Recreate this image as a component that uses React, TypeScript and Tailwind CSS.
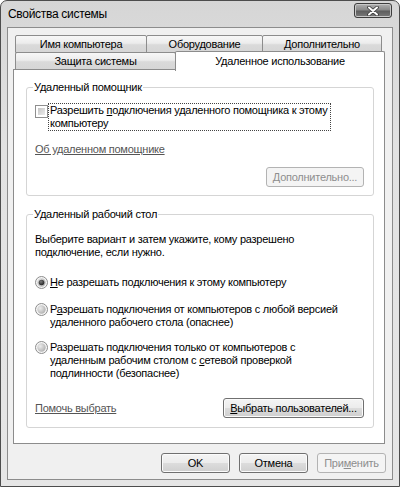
import React from 'react';

const btnFace =
  'bg-[linear-gradient(to_bottom,#f4f4f4_0%,#ececec_48%,#dcdcdc_52%,#cfcfcf_100%)] shadow-[inset_0_0_0_1px_#fbfbfb]';

const tabFace =
  'bg-[linear-gradient(to_bottom,#f7f7f7_0%,#ececec_45%,#dadada_55%,#d6d6d6_100%)]';

interface ButtonProps {
  children: React.ReactNode;
  width: string;
  disabled?: boolean;
}

const Button: React.FC<ButtonProps> = ({ children, width, disabled }) => (
  <div
    className={
      disabled
        ? `${width} flex h-[20px] items-center justify-center rounded-[3px] border border-[#b3b3b3] bg-[#f4f4f4] text-[#8e8e8e]`
        : `${width} flex h-[20px] items-center justify-center rounded-[3px] border border-[#707070] ${btnFace}`
    }
  >
    {children}
  </div>
);

const Radio: React.FC<{ checked?: boolean; id: string }> = ({ checked, id }) => (
  <svg width="13" height="13" viewBox="0 0 13 13" className="shrink-0">
    <defs>
      <radialGradient id={`${id}-in`} cx="0.35" cy="0.35" r="0.8">
        <stop offset="0" stopColor="#ececec" />
        <stop offset="1" stopColor="#a9a9a9" />
      </radialGradient>
      <radialGradient id={`${id}-dot`} cx="0.4" cy="0.35" r="0.7">
        <stop offset="0" stopColor="#7a7a7a" />
        <stop offset="1" stopColor="#1c1c1c" />
      </radialGradient>
    </defs>
    <circle cx="6.5" cy="6.5" r="6" fill="#f5f5f5" stroke="#8c8c8c" strokeWidth="1" />
    <circle cx="6.5" cy="6.5" r="4.2" fill={`url(#${id}-in)`} />
    {checked && <circle cx="6.5" cy="6.5" r="2.8" fill={`url(#${id}-dot)`} />}
  </svg>
);

const Tab: React.FC<{ children: React.ReactNode; width: string; first?: boolean }> = ({
  children,
  width,
  first,
}) => (
  <div
    className={`${width} ${first ? '' : '-ml-px'} flex h-full items-center justify-center rounded-t-[2px] border border-[#8c8c8c] ${tabFace}`}
  >
    {children}
  </div>
);

const App: React.FC = () => {
  return (
    <div className="flex h-[487px] w-[400px] flex-col rounded-t-[7px] border border-[#4d4d4d] bg-[linear-gradient(to_bottom,#d6d6d6_0%,#e2e2e2_30%,#e6e6e6_100%)] px-[6px] pb-[6px] font-['Liberation_Sans',Arial,sans-serif] text-[11px] leading-[13px] tracking-[-0.25px] text-black">
      {/* title bar */}
      <div className="flex h-[26px] items-start justify-between">
        <span className="pl-px pt-[7px] text-[12px] tracking-[-0.3px]">Свойства системы</span>
        <div className="mr-px mt-[2px] flex h-[15px] w-[38px] items-center justify-center rounded-[3px] border border-[#3d3d3d] bg-[linear-gradient(to_bottom,#b0b0b0_0%,#8a8a8a_45%,#5e5e5e_55%,#7a7a7a_100%)] shadow-[inset_0_0_0_1px_#c8c8c8]">
          <svg width="12" height="10" viewBox="0 0 12 10">
            <path d="M2 1.5 L10 8.5 M10 1.5 L2 8.5" stroke="#3a3a3a" strokeWidth="3.6" strokeLinecap="round" />
            <path d="M2 1.5 L10 8.5 M10 1.5 L2 8.5" stroke="#ffffff" strokeWidth="2" strokeLinecap="round" />
          </svg>
        </div>
      </div>

      {/* client area */}
      <div className="flex flex-1 flex-col border border-[#8c8c8c] bg-[#f0f0f0] pl-[5px] pr-[7px] pt-[7px]">
        <div className="ml-[2px] flex flex-col">
          <div className="flex h-[18px]">
            <Tab width="w-[132px]" first>
              Имя компьютера
            </Tab>
            <Tab width="w-[117px]">Оборудование</Tab>
            <Tab width="w-[120px]">Дополнительно</Tab>
          </div>
          <div className="-mt-px flex h-[18px] items-end">
            <Tab width="w-[161px]" first>
              Защита системы
            </Tab>
            <div className="relative z-10 -mb-px -ml-px flex h-[20px] w-[210px] items-center justify-center rounded-t-[2px] border border-b-0 border-[#8c8c8c] bg-white">
              Удаленное использование
            </div>
          </div>
        </div>

        <div className="-mt-px h-[375px] border border-[#8c8c8c] bg-white pl-[12px] pr-[10px] pt-[11px]">
          <fieldset className="rounded-[3px] border border-[#d5d5d5] px-[8px] pb-[8px]">
            <legend className="-ml-[2px] px-px">Удаленный помощник</legend>
            <div className="mt-[9px] flex items-start">
              <div className="mt-[2px] h-[13px] w-[13px] shrink-0 border border-[#8e8e8e] bg-white p-[2px]">
                <div className="h-full w-full bg-[linear-gradient(135deg,#c4c4c4,#ececec)]" />
              </div>
              <div className="w-[283px] whitespace-nowrap border border-dotted border-[#444] px-px">
                Разрешить <span className="underline">п</span>одключения удаленного помощника к этому
                <br />
                компьютеру
              </div>
            </div>
            <div className="mt-[12px] text-[#555] underline">Об удаленном помощнике</div>
            <div className="mt-[11px] flex justify-end pr-px">
              <Button width="w-[98px]" disabled>
                Дополнительно...
              </Button>
            </div>
          </fieldset>

          <fieldset className="mt-[12px] rounded-[3px] border border-[#d5d5d5] px-[8px] pb-[9px]">
            <legend className="-ml-[2px] px-px">Удаленный рабочий стол</legend>
            <p className="mt-[12px] whitespace-nowrap">
              Выберите вариант и затем укажите, кому разрешено
              <br />
              подключение, если нужно.
            </p>
            <div className="mt-[17px] flex items-start gap-[2px] whitespace-nowrap">
              <Radio id="r1" checked />
              <span>
                <span className="underline">Н</span>е разрешать подключения к этому компьютеру
              </span>
            </div>
            <div className="mt-[14px] flex items-start gap-[2px] whitespace-nowrap">
              <Radio id="r2" />
              <span>
                Р<span className="underline">а</span>зрешать подключения от компьютеров с любой версией
                <br />
                удаленного рабочего стола (опаснее)
              </span>
            </div>
            <div className="mt-[12px] flex items-start gap-[2px] whitespace-nowrap">
              <Radio id="r3" />
              <span>
                Разрешать подключения только от компьютеров с
                <br />
                удаленным рабочим столом с <span className="underline">с</span>етевой проверкой
                <br />
                подлинности (безопаснее)
              </span>
            </div>
            <div className="mt-[18px] flex items-center justify-between pr-px">
              <span className="text-[#555] underline">Помочь выбрать</span>
              <Button width="w-[141px]">
                <span>
                  <span className="underline">В</span>ыбрать пользователей...
                </span>
              </Button>
            </div>
          </fieldset>
        </div>

        <div className="-mr-px mt-[9px] flex justify-end gap-[9px]">
          <Button width="w-[69px]">OK</Button>
          <Button width="w-[69px]">Отмена</Button>
          <Button width="w-[69px]" disabled>
            <span>
              При<span className="underline">м</span>енить
            </span>
          </Button>
        </div>
      </div>
    </div>
  );
};

export default App;
